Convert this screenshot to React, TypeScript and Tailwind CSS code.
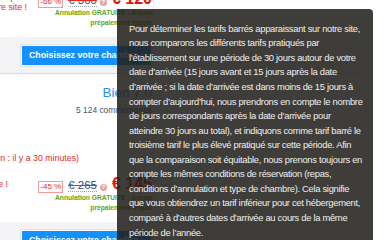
import React from 'react';

interface Offer {
  score: string;
  reviews: string;
  recent: string;
  recentBox: string;
  note: string[];
  noteBox: string;
  discount: string;
  was: string;
  now: string;
}

const OFFERS: Offer[] = [
  {
    score: '8.4',
    reviews: '2 310',
    recent: '(Dernière réservation : il y a 12 minutes)',
    recentBox: 'w-[79px]',
    note: ['Ne manquez pas cette offre unique !', 'Tarif le plus bas sur notre site !'],
    noteBox: 'w-[27px] mt-[2px]',
    discount: '-66 %',
    was: '€ 360',
    now: '€ 120',
  },
  {
    score: '7.0',
    reviews: '5 124',
    recent: '(Dernière réservation : il y a 30 minutes)',
    recentBox: 'w-[79px]',
    note: ['Plus que 1 chambre disponible !'],
    noteBox: 'w-[8px] mt-[4px]',
    discount: '-45 %',
    was: '€ 265',
    now: '€ 145',
  },
];

const TIP_LINES = [
  'Pour déterminer les tarifs barrés apparaissant sur notre site,',
  'nous comparons les différents tarifs pratiqués par',
  'l’établissement sur une période de 30 jours autour de votre',
  'date d’arrivée (15 jours avant et 15 jours après la date',
  'd’arrivée ; si la date d’arrivée est dans moins de 15 jours à',
  'compter d’aujourd’hui, nous prendrons en compte le nombre',
  'de jours correspondants après la date d’arrivée pour',
  'atteindre 30 jours au total), et indiquons comme tarif barré le',
  'troisième tarif le plus élevé pratiqué sur cette période. Afin',
  'que la comparaison soit équitable, nous prenons toujours en',
  'compte les mêmes conditions de réservation (repas,',
  'conditions d’annulation et type de chambre). Cela signifie',
  'que vous obtiendrez un tarif inférieur pour cet hébergement,',
  'comparé à d’autres dates d’arrivée au cours de la même',
  'période de l’année.',
];

const OfferCard = ({ offer }: { offer: Offer }) => (
  <div className="w-[360px]">
    <div className="flex h-[148px]">
      <div className="flex w-[154px] flex-col items-end border-r border-[#e4e6e9] pr-[1px] pt-[11px]">
        <div className="whitespace-nowrap text-[13.5px] leading-[16px] text-[#2b8ef0]">Bien {offer.score}</div>
        <div className="mt-[3.5px] whitespace-nowrap text-[8.4px] leading-[10px] text-[#46556a]">
          {offer.reviews} commentaires
        </div>
        <div className={`mt-[38px] flex justify-end self-start whitespace-nowrap text-[8.8px] leading-[10px] text-[#e8291f] ${offer.recentBox}`}>
          <span>{offer.recent}</span>
        </div>

        <div className="mt-[12px] flex w-full items-start justify-between">
          <div className={`flex flex-col items-end whitespace-nowrap text-[8.8px] leading-[10px] text-[#e8291f] ${offer.noteBox}`}>
            {offer.note.map((line) => (
              <span key={line}>{line}</span>
            ))}
          </div>
          <div className="flex flex-col items-end">
            <div className="flex h-[18px] items-baseline whitespace-nowrap">
              <span className="border border-[#f29b9b] px-[1px] text-[8px] leading-[10px] text-[#e8291f]">
                {offer.discount}
              </span>
              <span className="ml-[5px] border-b border-dotted border-[#9aa3ad] text-[11.5px] leading-[12px] text-[#2c4a86] line-through decoration-[#e8291f]">
                {offer.was}
              </span>
              <span className="ml-[3px] inline-flex h-[7px] w-[7px] items-center justify-center rounded-full bg-[#e9a2a2] text-[6px] font-bold leading-[7px] text-white">
                ?
              </span>
              <span className="ml-[5px] text-[16px] font-bold leading-[18px] text-[#e8130c]">{offer.now}</span>
            </div>
            <div className="text-right text-[6.7px] font-bold leading-[10px] text-[#5aa51c]">
              Annulation GRATUITE - Aucun
              <br />
              prépaiement requis
            </div>
          </div>
        </div>
      </div>
    </div>

    <div className="h-[37px] border-b border-[#d6d9dd] bg-[#f3f3f5] pl-[21px] pt-[8px]">
      <button className="flex h-[21px] w-[131px] items-center justify-between border border-white bg-[#1590ff] pl-[7px] pr-[8px] text-[8.8px] font-bold text-white shadow-[0_0_0_1px_#e1e3e6]">
        <span>Choisissez votre chambre</span>
        <span>›</span>
      </button>
    </div>
  </div>
);

const PriceTooltip = () => (
  <div className="absolute left-[117px] top-[9px] h-[240px] w-[256px] rounded-tr-[4px] bg-[rgba(33,32,27,0.87)] pl-[12px] pt-[12.7px] text-[9.4px] leading-[14.57px] tracking-[-0.3px] text-[#efefef]">
    {TIP_LINES.map((line) => (
      <div key={line} className="whitespace-nowrap">
        {line}
      </div>
    ))}
  </div>
);

export default function App() {
  return (
    <div className="relative h-[240px] w-[387px] overflow-hidden bg-white font-['Liberation_Sans',Arial,sans-serif]">
      <div className="-mt-[111px]">
        {OFFERS.map((offer) => (
          <OfferCard key={offer.score} offer={offer} />
        ))}
      </div>
      <PriceTooltip />
    </div>
  );
}
